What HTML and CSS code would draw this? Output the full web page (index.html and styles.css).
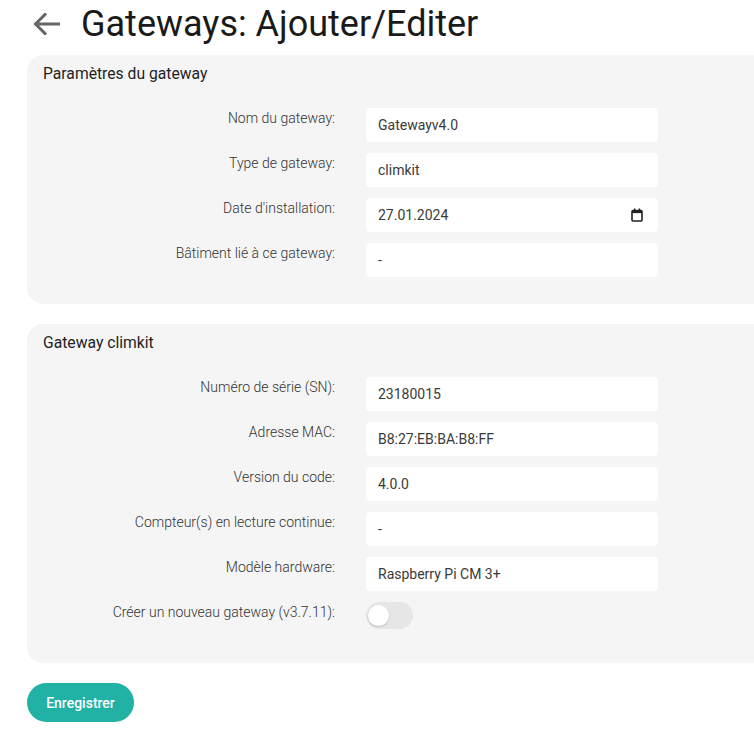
FILE: index.html
```html
<!DOCTYPE html>
<html lang="fr">
<head>
<meta charset="utf-8">
<title>Gateways: Ajouter/Editer</title>
<link rel="stylesheet" href="styles.css">
</head>
<body>
<div class="page">
  <header class="header">
    <svg class="back" width="30" height="26" viewBox="0 0 30 26" aria-hidden="true">
      <path d="M28 13H4M14 2.5L3.5 13 14 23.5" fill="none" stroke="#666" stroke-width="3" stroke-linecap="butt"/>
    </svg>
    <h1 class="title">Gateways: Ajouter/Editer</h1>
  </header>

  <section class="card">
    <h2 class="card-title">Paramètres du gateway</h2>
    <div class="form">
      <div class="label">Nom du gateway:</div>
      <div class="field">Gatewayv4.0</div>
      <div class="label">Type de gateway:</div>
      <div class="field">climkit</div>
      <div class="label">Date d'installation:</div>
      <div class="field field-date"><span>27.01.2024</span>
        <svg class="cal" width="12" height="14" viewBox="0 0 12 14" aria-hidden="true">
          <rect x="1" y="2.5" width="10" height="10.5" rx="1" fill="none" stroke="#222" stroke-width="1.6"/>
          <rect x="1" y="2.5" width="10" height="2.6" fill="#222"/>
          <rect x="2.8" y="0.5" width="1.6" height="3" fill="#222"/>
          <rect x="7.6" y="0.5" width="1.6" height="3" fill="#222"/>
        </svg>
      </div>
      <div class="label">Bâtiment lié à ce gateway:</div>
      <div class="field">-</div>
    </div>
  </section>

  <section class="card">
    <h2 class="card-title">Gateway climkit</h2>
    <div class="form">
      <div class="label">Numéro de série (SN):</div>
      <div class="field">23180015</div>
      <div class="label">Adresse MAC:</div>
      <div class="field">B8:27:EB:BA:B8:FF</div>
      <div class="label">Version du code:</div>
      <div class="field">4.0.0</div>
      <div class="label">Compteur(s) en lecture continue:</div>
      <div class="field">-</div>
      <div class="label">Modèle hardware:</div>
      <div class="field">Raspberry Pi CM 3+</div>
      <div class="label">Créer un nouveau gateway (v3.7.11):</div>
      <div class="toggle-cell"><span class="toggle"><span class="knob"></span></span></div>
    </div>
  </section>

  <button class="save" type="button">Enregistrer</button>
</div>
</body>
</html>
```

FILE: styles.css
```css
html, body {
  margin: 0;
  padding: 0;
  background: #fff;
  overflow: hidden;
}
body {
  font-family: Roboto, "Liberation Sans", Arial, sans-serif;
  color: #222;
}
.page {
  padding: 0 0 0 27px;
}
.header {
  display: flex;
  align-items: center;
  height: 47px;
  padding-left: 5px;
  margin-bottom: 8px;
}
.back {
  display: block;
  margin-right: 19px;
}
.title {
  margin: 0;
  font-size: 36px;
  font-weight: 400;
  line-height: 46px;
  color: #1a1a1a;
}
.card {
  background: #f5f5f5;
  border-radius: 16px 0 0 16px;
  padding: 9px 0 27px 0;
  margin-bottom: 20px;
}
.card-title {
  margin: 0 0 24px 16px;
  font-size: 15.7px;
  font-weight: 400;
  line-height: 20px;
  color: #1f1f1f;
}
.form {
  display: grid;
  grid-template-columns: 308px 292px;
  column-gap: 31px;
  row-gap: 11px;
}
.label {
  text-align: right;
  font-size: 14px;
  line-height: 20px;
  font-weight: 300;
  color: #333;
}
.field {
  background: #fff;
  border-radius: 4px;
  height: 34px;
  box-sizing: border-box;
  padding: 0 12px;
  display: flex;
  align-items: center;
  font-size: 14px;
  color: #3a3a3a;
}
.field-date {
  justify-content: space-between;
  padding-right: 15px;
}
.cal {
  display: block;
}
.toggle-cell {
  height: 34px;
}
.toggle {
  display: block;
  width: 47px;
  height: 27px;
  border-radius: 14px;
  background: #e6e6e6;
  position: relative;
}
.knob {
  position: absolute;
  left: 2px;
  top: 3px;
  width: 21px;
  height: 21px;
  border-radius: 50%;
  background: #fff;
  box-shadow: 0 1px 2px rgba(0,0,0,0.18);
}
.save {
  margin-top: 0;
  width: 107px;
  height: 39px;
  border: none;
  border-radius: 20px;
  background: #22b1a5;
  color: #fff;
  font-family: Roboto, "Liberation Sans", Arial, sans-serif;
  font-size: 14px;
  font-weight: 500;
  padding: 0;
}
```
